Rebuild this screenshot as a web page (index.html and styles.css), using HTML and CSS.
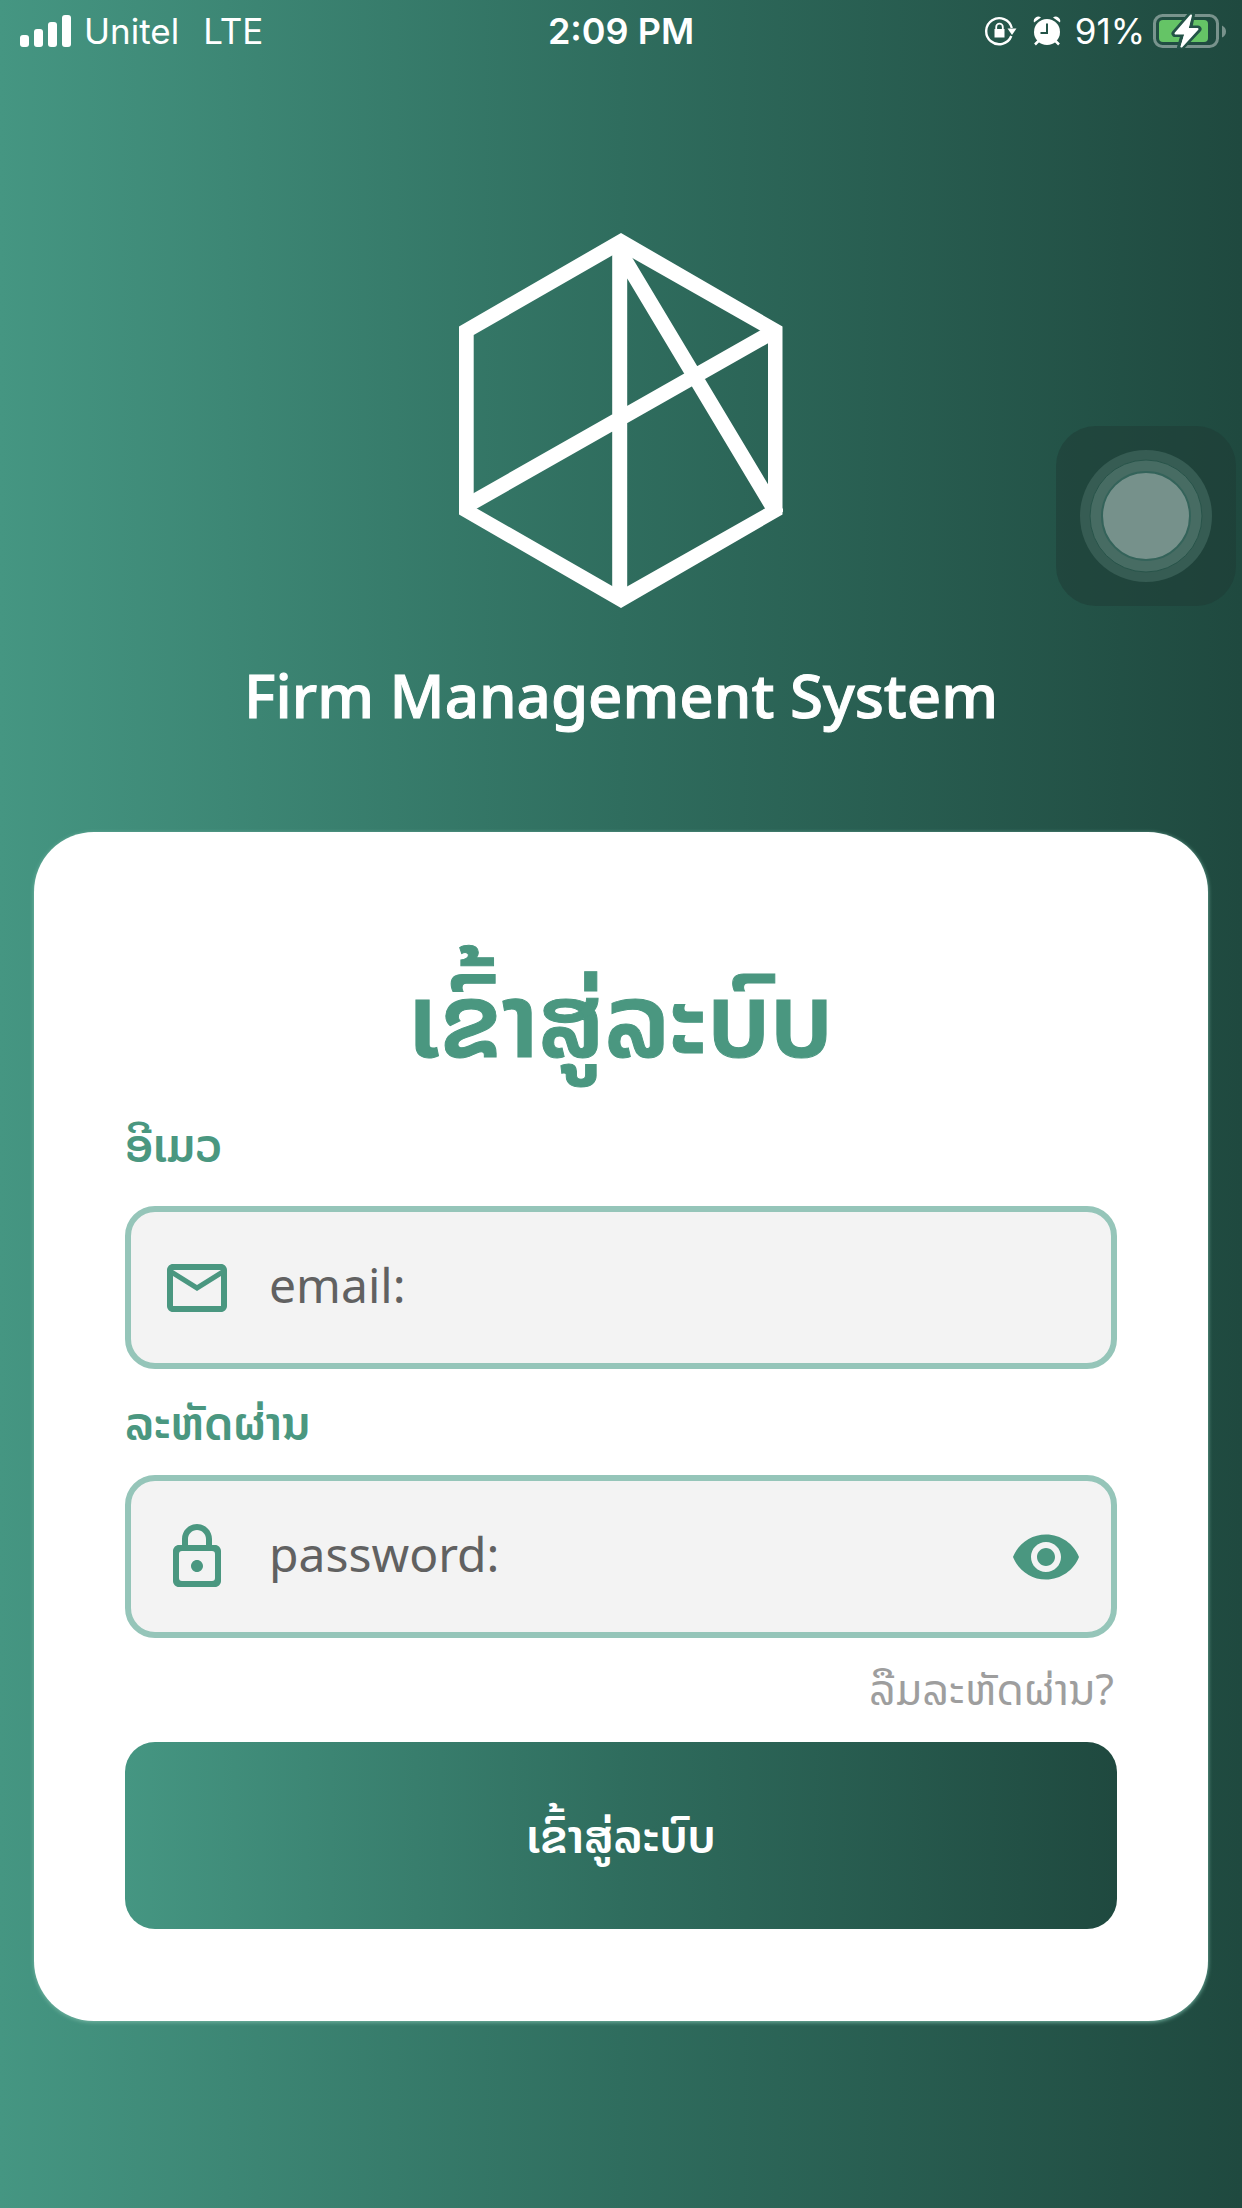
FILE: index.html
```html
<!DOCTYPE html>
<html lang="lo">
<head>
<meta charset="utf-8">
<meta name="viewport" content="width=device-width, initial-scale=1">
<title>Firm Management System</title>
<link rel="stylesheet" href="styles.css">
</head>
<body>
<header class="status">
  <div class="status-side">
    <svg class="signal" viewBox="0 0 52 32" aria-hidden="true"><rect x="0" y="20" width="9" height="12" rx="3"/><rect x="14" y="14" width="9" height="18" rx="3"/><rect x="28" y="7" width="9" height="25" rx="3"/><rect x="42" y="0" width="9" height="32" rx="3"/></svg>
    <span class="carrier">Unitel</span>
    <span class="network">LTE</span>
  </div>
  <time class="clock">2:09 PM</time>
  <div class="status-side status-right">
    <svg class="rotation" viewBox="0 0 32 30" aria-hidden="true"><path d="M26.300 20A13 13 0 1 1 26.800 12" fill="none" stroke="#fff" stroke-width="2.400"/><path d="M22.500 12.500h9l-4.500 6.500z"/><path d="M9.500 13h10v8.500h-10z"/><path d="M11.200 14v-3a3.300 3.300 0 0 1 6.600 0v3" fill="none" stroke="#fff" stroke-width="1.800"/></svg>
    <svg class="alarm" viewBox="0 0 28 30" aria-hidden="true"><circle cx="14" cy="16" r="13"/><path d="M1 6.500A4.500 4.500 0 0 1 8 1.500zM27 6.500A4.500 4.500 0 0 0 20 1.500z"/><path d="M5.500 25l-3.500 3.500M22.500 25l3.500 3.500" stroke="#fff" stroke-width="2.500"/><path d="M14 7.500V17H7.500" fill="none" stroke="#235347" stroke-width="2"/></svg>
    <span class="percent">91%</span>
    <svg class="battery" viewBox="0 0 74 36" aria-hidden="true"><rect x="1.500" y="2.500" width="63" height="31" rx="8" fill="none" stroke="#fff" stroke-opacity=".4" stroke-width="3"/><path d="M69 12.500q4 2 4 6t-4 6z" fill-opacity=".4"/><rect x="6" y="7" width="49" height="22" rx="4" fill="#65c466"/><path d="M38.500 1.500L22 20.500h9.500L27.500 34.500 45 16h-9.500z" fill="#fff" stroke="#235347" stroke-width="7" stroke-linejoin="round" paint-order="stroke"/><path d="M38 2.500L22.500 20.500h10L28.500 33.500 44.500 16h-10z" stroke="#fff" stroke-width="2" stroke-linejoin="round"/></svg>
  </div>
</header>

<main class="page">
  <section class="brand">
    <svg class="logo" viewBox="0 0 324 375" aria-hidden="true"><path fill-rule="evenodd" d="M162 0L323.500 93.500V281.500L162 375 0 281.500V93.500zM161 18L14.700 102V273.700L161 357.500 309 273.700V102z"/><path d="M160.700 12V364M8 272.500L318 96.500M158.700 15L318.700 282" fill="none" stroke="#fff" stroke-width="15"/></svg>
    <h1 class="brand-name">Firm Management System</h1>
  </section>

  <form class="card">
    <h2 class="card-title">ເຂົ້າສູ່ລະບົບ</h2>
    <label class="label" for="email">ອີເມວ</label>
    <div class="field">
      <svg class="icon" viewBox="0 0 24 24" aria-hidden="true"><path d="M22 6c0-1.100-.9-2-2-2H4c-1.100 0-2 .9-2 2v12c0 1.100.9 2 2 2h16c1.100 0 2-.9 2-2V6zm-2 0l-8 5-8-5h16zm0 12H4V8l8 5 8-5v10z"/></svg>
      <input class="input" id="email" type="email" placeholder="email:">
    </div>
    <label class="label" for="password">ລະຫັດຜ່ານ</label>
    <div class="field">
      <svg class="icon" viewBox="0 0 24 24" aria-hidden="true"><path d="M12 17c1.100 0 2-.9 2-2s-.9-2-2-2-2 .9-2 2 .9 2 2 2zm6-9h-1V6c0-2.760-2.240-5-5-5S7 3.240 7 6v2H6c-1.100 0-2 .9-2 2v10c0 1.100.9 2 2 2h12c1.100 0 2-.9 2-2V10c0-1.100-.9-2-2-2zM9 6c0-1.660 1.340-3 3-3s3 1.340 3 3v2H9V6zm9 13q0 1-1 1H7q-1 0-1-1v-8q0-1 1-1h10q1 0 1 1z"/></svg>
      <input class="input" id="password" type="password" placeholder="password:">
      <button class="reveal" type="button" aria-label="Show password"><svg class="icon" viewBox="0 0 24 24" aria-hidden="true"><path d="M12 4.500C7 4.500 2.730 7.610 1 12c1.730 4.390 6 7.500 11 7.500s9.270-3.110 11-7.500c-1.730-4.390-6-7.500-11-7.500zM12 17c-2.760 0-5-2.240-5-5s2.240-5 5-5 5 2.240 5 5-2.240 5-5 5zm0-8c-1.660 0-3 1.340-3 3s1.340 3 3 3 3-1.340 3-3-1.340-3-3-3z"/></svg></button>
    </div>
    <a class="forgot" href="#">ລືມລະຫັດຜ່ານ?</a>
    <button class="submit" type="submit">ເຂົ້າສູ່ລະບົບ</button>
  </form>
</main>

<div class="touch"><svg viewBox="0 0 180 180" aria-hidden="true"><circle cx="90" cy="90" r="66" fill="#365c53"/><circle cx="90" cy="90" r="56" fill="#476c63" stroke="#28544a"/><circle cx="90" cy="90" r="44" fill="#76918b" stroke="#34635a" stroke-width="2"/></svg></div>
</body>
</html>
```

FILE: styles.css
```css
:root {
  --green: #4a9780;
  --shade: linear-gradient(90deg, #459682, #2f6d5e 50%, #1f493f);
}

* {
  box-sizing: border-box;
}

body {
  margin: 0;
  min-height: 100vh;
  background: var(--shade);
  font-family: "Noto Sans", "Noto Sans Lao", "DejaVu Sans", sans-serif;
  color: #fff;
}

svg {
  display: block;
  fill: currentColor;
}

.status {
  display: grid;
  grid-template-columns: 1fr auto 1fr;
  align-items: center;
  height: 62px;
  padding: 0 15px 0 20px;
  font: 35px/40px Inter, sans-serif;
}

.status-side {
  display: flex;
  align-items: center;
}

.status-right {
  justify-content: flex-end;
}

.signal {
  width: 52px;
  height: 32px;
}

.carrier {
  margin-left: 12px;
}

.network {
  margin-left: 24px;
}

.clock {
  margin-right: 5px;
  font-size: 36px;
  font-weight: 600;
}

.rotation {
  width: 32px;
  height: 30px;
}

.alarm {
  width: 28px;
  height: 30px;
  margin-left: 16px;
}

.percent {
  margin-left: 14px;
}

.battery {
  width: 74px;
  height: 36px;
  margin-left: 8px;
}

.page {
  padding: 0 34px 186px;
}

.brand {
  display: flex;
  flex-direction: column;
  align-items: center;
  padding-top: 171px;
}

.logo {
  width: 324px;
  height: 375px;
}

.brand-name {
  margin: 43px 0 93px;
  font-size: 60px;
  line-height: 88px;
  font-weight: 500;
  text-align: center;
  -webkit-text-stroke: 1px currentColor;
}

.card {
  display: flex;
  flex-direction: column;
  padding: 96px 91px 92px;
  border-radius: 60px;
  background: #fff;
  box-shadow: 0 1px 4px #78b8a6;
  color: var(--green);
}

.card-title {
  margin: 0;
  font-size: 103px;
  line-height: 178px;
  font-weight: 600;
  text-align: center;
  -webkit-text-stroke: 1px currentColor;
}

.label {
  height: 100px;
  font-size: 46px;
  line-height: 76px;
  font-weight: 600;
}

.field {
  display: flex;
  align-items: center;
  height: 163px;
  padding: 0 29px 0 30px;
  border: 6px solid #95c5b9;
  border-radius: 30px;
  background: #f3f3f3;
}

.field + .label {
  height: 106px;
  line-height: 106px;
}

.icon {
  flex: none;
  width: 72px;
  height: 72px;
}

.input {
  flex: 1;
  min-width: 0;
  margin-left: 36px;
  padding: 0 0 6px;
  border: 0;
  outline: 0;
  background: none;
  font: 48px/66px "Noto Sans", sans-serif;
  color: #616161;
}

.input::placeholder {
  color: #616161;
  opacity: 1;
}

.reveal {
  margin: 0;
  padding: 0;
  border: 0;
  background: none;
  color: inherit;
}

.forgot {
  align-self: flex-end;
  height: 104px;
  margin-right: 3px;
  font-size: 43px;
  line-height: 102px;
  color: #9e9e9e;
  text-decoration: none;
}

.submit {
  height: 187px;
  padding: 0 0 2px;
  border: 0;
  border-radius: 30px;
  background: var(--shade);
  font: 600 46px/60px "Noto Sans", "Noto Sans Lao", "DejaVu Sans", sans-serif;
  color: #fff;
}

.touch {
  position: absolute;
  top: 426px;
  right: 6px;
  width: 180px;
  border-radius: 40px;
  background: rgba(30, 57, 51, 0.5);
}
```
